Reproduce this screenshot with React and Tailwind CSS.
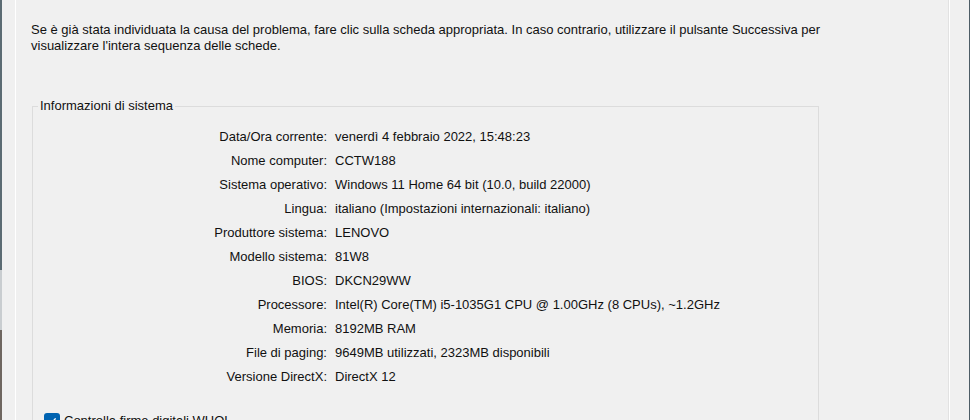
import React from "react";

const infoRows = [
  ["Data/Ora corrente:", "venerdì 4 febbraio 2022, 15:48:23"],
  ["Nome computer:", "CCTW188"],
  ["Sistema operativo:", "Windows 11 Home 64 bit (10.0, build 22000)"],
  ["Lingua:", "italiano (Impostazioni internazionali: italiano)"],
  ["Produttore sistema:", "LENOVO"],
  ["Modello sistema:", "81W8"],
  ["BIOS:", "DKCN29WW"],
  ["Processore:", "Intel(R) Core(TM) i5-1035G1 CPU @ 1.00GHz (8 CPUs), ~1.2GHz"],
  ["Memoria:", "8192MB RAM"],
  ["File di paging:", "9649MB utilizzati, 2323MB disponibili"],
  ["Versione DirectX:", "DirectX 12"],
];

const App = () => {
  return (
    <div
      className="flex h-[420px] w-[970px] overflow-hidden bg-[#f0f0f0] text-[13px] text-[#111]"
      style={{ fontFamily: "Tahoma, 'Liberation Sans', sans-serif" }}
    >
      {/* desktop behind the window edge */}
      <div className="flex w-[2px] flex-col">
        <div className="h-[270px] bg-[#5b6b73]" />
        <div className="h-[60px] bg-[#c9cdd0]" />
        <div className="flex-1 bg-[#6e6660]" />
      </div>

      <div className="flex flex-1">
        <div className="w-[13px]" />
        {/* tab page */}
        <div className="flex-1 border-l border-r border-l-white border-r-[#e2e2e2] pl-[15px] pr-[20px]">
          <p className="mt-[22px] w-[800px] leading-[16px]">
            Se è già stata individuata la causa del problema, fare clic sulla scheda appropriata. In caso
            contrario, utilizzare il pulsante Successiva per visualizzare l'intera sequenza delle schede.
          </p>

          <fieldset className="mt-[44px] ml-[1px] h-[400px] w-[787px] border border-[#dcdcdc]">
            <legend className="ml-[5px] px-[2px] leading-[16px]">Informazioni di sistema</legend>

            <div className="mt-[11px] flex flex-col">
              {infoRows.map(([label, value]) => (
                <div key={label} className="flex h-[24px] items-center">
                  <span className="w-[294px] text-right">{label}</span>
                  <span className="ml-[8px]">{value}</span>
                </div>
              ))}
            </div>

            <label className="mt-[22px] ml-[11px] flex items-center gap-[4px]">
              <span className="flex h-[16px] w-[16px] items-center justify-center rounded-[3px] bg-[#0063b1]">
                <svg width="10" height="10" viewBox="0 0 10 10" fill="none">
                  <path d="M1.5 5.2 L4 7.6 L8.6 2.4" stroke="#fff" strokeWidth="1.4" />
                </svg>
              </span>
              <span>Controlla firme digitali WHQL</span>
            </label>
          </fieldset>
        </div>
        <div className="w-[3px] border-l border-l-white" />
        <div className="w-[17px]" />
      </div>

      <div className="w-[1px] bg-[#4d5d66]" />
    </div>
  );
};

export default App;
